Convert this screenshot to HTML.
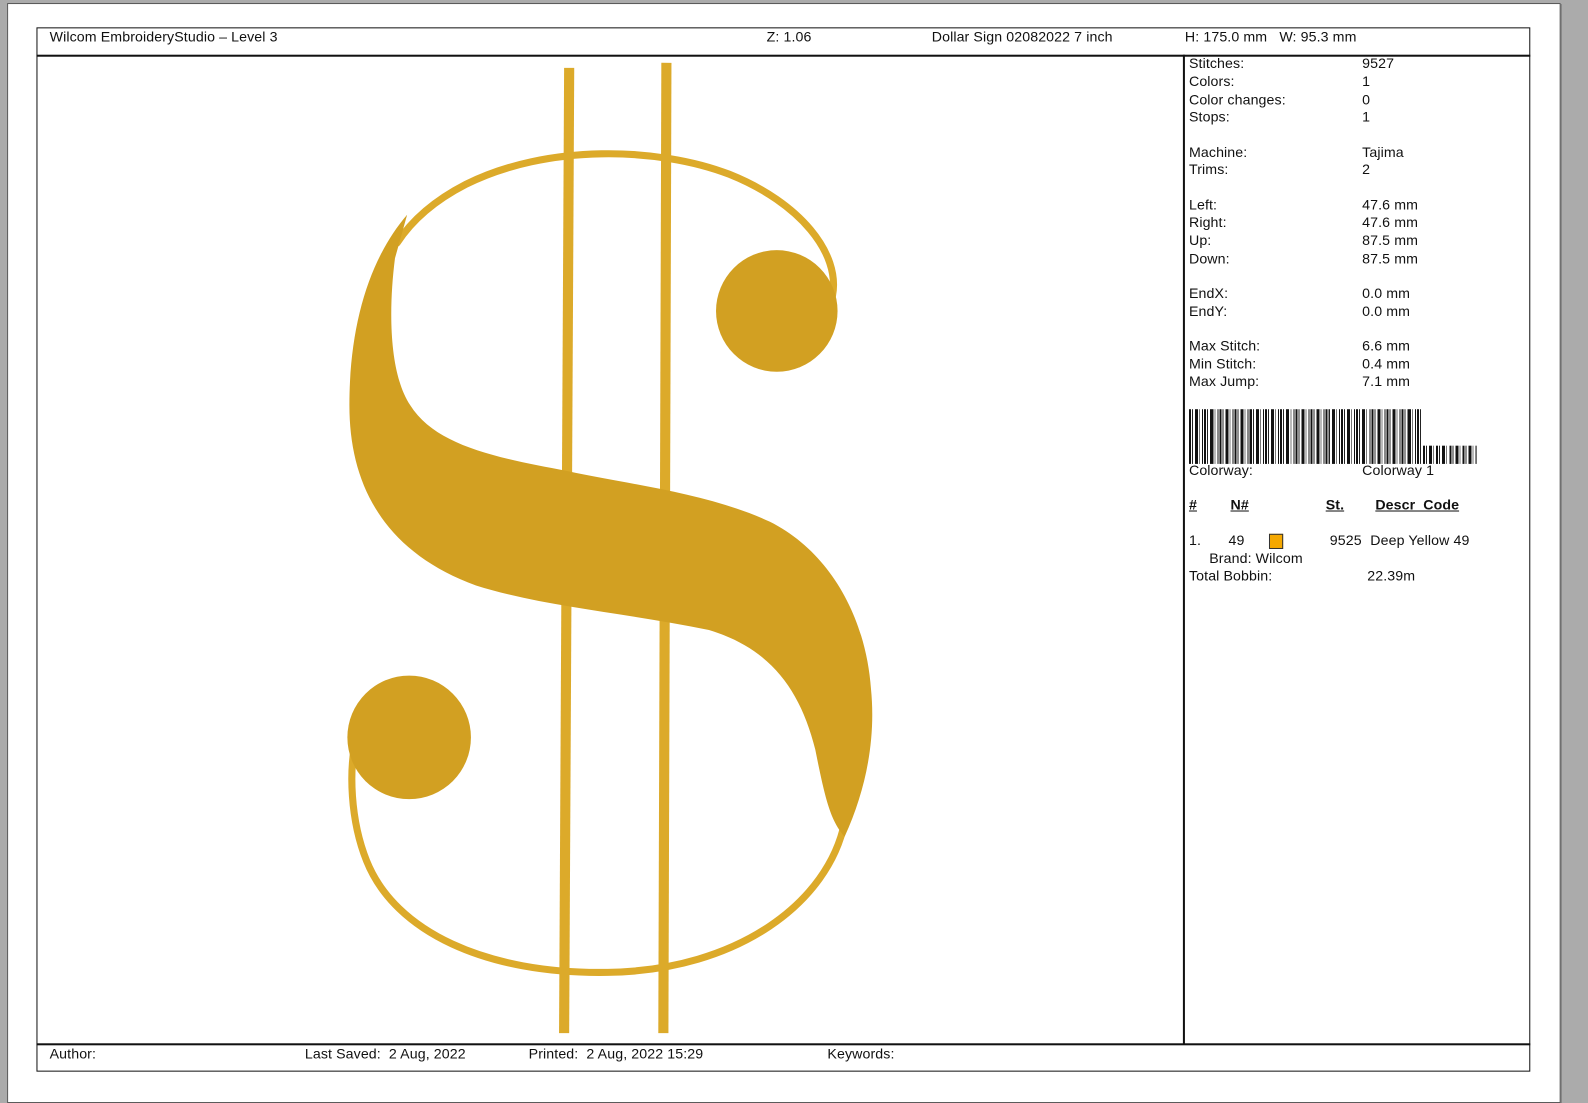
<!DOCTYPE html>
<html><head><meta charset="utf-8"><style>
html,body{margin:0;padding:0;width:1588px;height:1103px;overflow:hidden;background:#ababab;}
#w{position:absolute;left:0;top:0;width:1568px;height:1089px;transform:scale(1.01276,1.0129);transform-origin:0 0;font-family:"Liberation Sans",Arial,sans-serif;font-size:14px;color:#111;}
.pg{position:absolute;left:7px;top:3px;width:1532px;height:1084px;background:#fff;border:1px solid #555;box-shadow:1px 1px 0 #777;}
.fr{position:absolute;left:36px;top:27px;width:1473px;height:1029px;border:1.5px solid #111;}
.hl{position:absolute;background:#111;}
.t{position:absolute;white-space:nowrap;line-height:16px;letter-spacing:0.1px;}
.b{font-weight:bold;text-decoration:underline;}
</style></head><body><div id="w">
<div class="pg"></div>
<div class="fr"></div>
<div class="hl" style="left:36px;top:54px;width:1475px;height:1.5px"></div>
<div class="hl" style="left:36px;top:1030px;width:1475px;height:1.5px"></div>
<div class="hl" style="left:1168px;top:54px;width:1.5px;height:977px"></div>

<div class="t" style="left:49px;top:28px">Wilcom EmbroideryStudio – Level 3</div>
<div class="t" style="left:757px;top:28px">Z: 1.06</div>
<div class="t" style="left:920px;top:28px">Dollar Sign 02082022 7 inch</div>
<div class="t" style="left:1170px;top:28px">H: 175.0 mm&nbsp;&nbsp; W: 95.3 mm</div>

<div class="t" style="left:49px;top:1032px">Author:</div>
<div class="t" style="left:301px;top:1032px">Last Saved:&nbsp; 2 Aug, 2022</div>
<div class="t" style="left:522px;top:1032px">Printed:&nbsp; 2 Aug, 2022 15:29</div>
<div class="t" style="left:817px;top:1032px">Keywords:</div>

<div class="t" style="left:1174px;top:54px">Stitches:</div><div class="t" style="left:1345px;top:54px">9527</div>
<div class="t" style="left:1174px;top:72px">Colors:</div><div class="t" style="left:1345px;top:72px">1</div>
<div class="t" style="left:1174px;top:90px">Color changes:</div><div class="t" style="left:1345px;top:90px">0</div>
<div class="t" style="left:1174px;top:107px">Stops:</div><div class="t" style="left:1345px;top:107px">1</div>
<div class="t" style="left:1174px;top:142px">Machine:</div><div class="t" style="left:1345px;top:142px">Tajima</div>
<div class="t" style="left:1174px;top:159px">Trims:</div><div class="t" style="left:1345px;top:159px">2</div>
<div class="t" style="left:1174px;top:194px">Left:</div><div class="t" style="left:1345px;top:194px">47.6 mm</div>
<div class="t" style="left:1174px;top:211px">Right:</div><div class="t" style="left:1345px;top:211px">47.6 mm</div>
<div class="t" style="left:1174px;top:229px">Up:</div><div class="t" style="left:1345px;top:229px">87.5 mm</div>
<div class="t" style="left:1174px;top:247px">Down:</div><div class="t" style="left:1345px;top:247px">87.5 mm</div>
<div class="t" style="left:1174px;top:281px">EndX:</div><div class="t" style="left:1345px;top:281px">0.0 mm</div>
<div class="t" style="left:1174px;top:299px">EndY:</div><div class="t" style="left:1345px;top:299px">0.0 mm</div>
<div class="t" style="left:1174px;top:333px">Max Stitch:</div><div class="t" style="left:1345px;top:333px">6.6 mm</div>
<div class="t" style="left:1174px;top:351px">Min Stitch:</div><div class="t" style="left:1345px;top:351px">0.4 mm</div>
<div class="t" style="left:1174px;top:368px">Max Jump:</div><div class="t" style="left:1345px;top:368px">7.1 mm</div>

<div style="position:absolute;left:1174px;top:404px;width:231px;height:54px;background:repeating-linear-gradient(90deg,#111 0 2px,#fff 2px 3px,#222 3px 4px,#fff 4px 6px,#111 6px 9px,#fff 9px 10px,#777 10px 11px,#fff 11px 13px,#111 13px 14px,#fff 14px 15px)"></div>
<div style="position:absolute;left:1405px;top:440px;width:53px;height:18px;background:repeating-linear-gradient(90deg,#111 0 2px,#fff 2px 3px,#222 3px 4px,#fff 4px 6px,#111 6px 9px,#fff 9px 10px,#777 10px 11px,#fff 11px 13px)"></div>

<div class="t" style="left:1174px;top:456px">Colorway:</div><div class="t" style="left:1345px;top:456px">Colorway 1</div>
<div class="t b" style="left:1174px;top:490px">#</div>
<div class="t b" style="left:1215px;top:490px">N#</div>
<div class="t b" style="left:1309px;top:490px">St.</div>
<div class="t b" style="left:1358px;top:490px">Descr_Code</div>
<div class="t" style="left:1174px;top:525px">1.</div>
<div class="t" style="left:1213px;top:525px">49</div>
<div style="position:absolute;left:1253px;top:527px;width:12px;height:13px;background:#f5a800;border:1px solid #333"></div>
<div class="t" style="left:1313px;top:525px">9525</div>
<div class="t" style="left:1353px;top:525px">Deep Yellow 49</div>
<div class="t" style="left:1194px;top:543px">Brand: Wilcom</div>
<div class="t" style="left:1174px;top:560px">Total Bobbin:</div><div class="t" style="left:1350px;top:560px">22.39m</div>

<svg style="position:absolute;left:0;top:0" width="1568" height="1089" viewBox="0 0 1568 1089">
<g fill="none" stroke="#dcaa2a">
<line x1="562" y1="67" x2="557" y2="1020" stroke-width="10"/>
<line x1="658" y1="62" x2="655" y2="1020" stroke-width="10"/>
<path d="M822 292 C830 250 790 200 720 172 C650 145 540 142 460 182 C425 200 405 220 392 240" stroke-width="7" stroke-linecap="round"/>
<path d="M834 812 C818 890 730 958 600 960 C480 962 390 920 362 850 C346 810 344 760 352 728" stroke-width="7" stroke-linecap="round"/>
</g>
<g fill="#d2a022">
<circle cx="767" cy="307" r="60"/>
<circle cx="404" cy="728" r="61"/>
<path d="M402 212 C365 255 345 320 345 400 C345 480 380 545 470 578 C540 600 620 605 700 622 C760 640 790 680 805 740 C815 790 820 810 834 826 C855 780 865 730 860 680 C855 610 820 545 760 515 C700 487 620 478 560 465 C490 452 430 440 405 400 C385 370 383 310 390 255 Z"/>
</g>
</svg>
</div></body></html>
